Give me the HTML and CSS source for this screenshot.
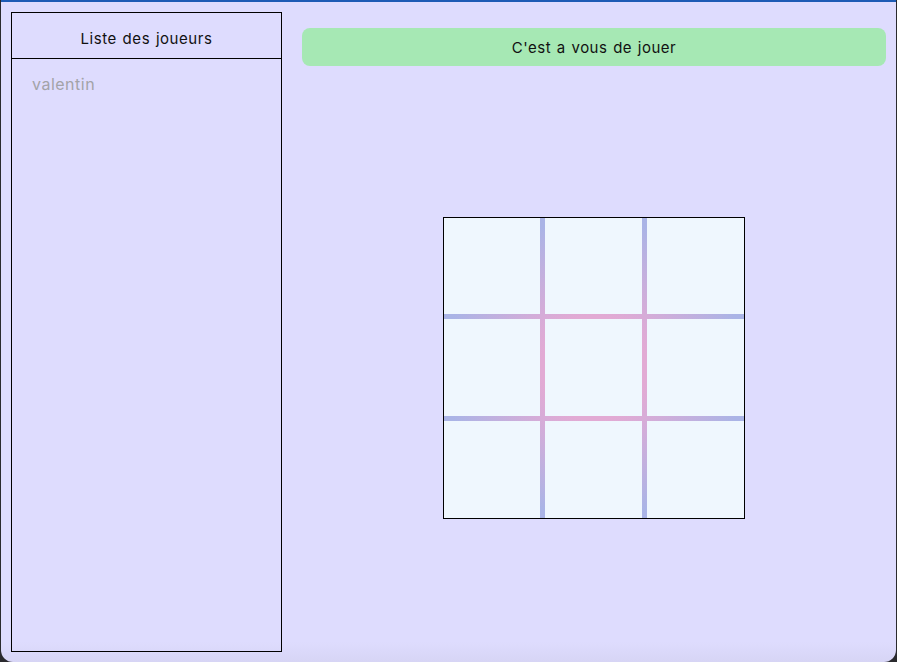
FILE: index.html
```html
<!DOCTYPE html>
<html lang="fr">
<head>
<meta charset="utf-8">
<title>Morpion</title>
<link rel="stylesheet" href="styles.css">
</head>
<body>
<div class="app">
  <aside class="players">
    <div class="players-header">Liste des joueurs</div>
    <ul class="players-list">
      <li class="player">valentin</li>
    </ul>
  </aside>
  <main class="game">
    <div class="banner">C'est a vous de jouer</div>
    <div class="board-area">
      <div class="board">
        <div class="cell"></div><div class="cell"></div><div class="cell"></div>
        <div class="cell"></div><div class="cell"></div><div class="cell"></div>
        <div class="cell"></div><div class="cell"></div><div class="cell"></div>
      </div>
    </div>
  </main>
</div>
</body>
</html>
```

FILE: styles.css
```css
* { box-sizing: border-box; }
html, body {
  margin: 0;
  height: 100%;
  background: #2a2a2e;
}
body {
  font-family: "Inter", "Open Sans", "Liberation Sans", sans-serif;
  color: #111;
}
.app {
  height: 662px;
  margin: 0 1px;
  background: linear-gradient(to bottom, #dedcfe 0, #dedcfe 640px, #d6d4f4 662px);
  border-top: 2px solid #1d5bb5;
  border-radius: 0 0 12px 12px;
  display: flex;
  padding: 10px 10px 10px 10px;
}
.players {
  width: 271px;
  flex: none;
  border: 1px solid #000;
  display: flex;
  flex-direction: column;
}
.players-header {
  height: 46px;
  border-bottom: 1px solid #000;
  display: flex;
  align-items: center;
  justify-content: center;
  padding-top: 5px;
  font-size: 15px;
  letter-spacing: 0.55px;
  word-spacing: 1px;
}
.players-list {
  list-style: none;
  margin: 0;
  padding: 15px 20px;
}
.player {
  color: #a3a3a8;
  font-size: 16px;
  letter-spacing: 0.5px;
  line-height: 20px;
}
.game {
  flex: 1;
  display: flex;
  flex-direction: column;
  padding: 16px 0 0 20px;
}
.banner {
  height: 38px;
  background: #a6e8b4;
  border-radius: 8px;
  display: flex;
  align-items: center;
  justify-content: center;
  font-size: 15px;
  letter-spacing: 0.5px;
  word-spacing: 1px;
}
.board-area {
  flex: 1;
  display: flex;
  align-items: center;
  justify-content: center;
  padding-top: 18px;
}
.board {
  width: 302px;
  height: 302px;
  border: 1px solid #000;
  display: grid;
  grid-template-columns: 96px 97px 97px;
  grid-template-rows: 96px 97px 97px;
  gap: 5px;
  background: radial-gradient(circle closest-side, #e2aad4 35%, #aab4e6 100%);
}
.cell {
  background: #eff7fe;
}
```
